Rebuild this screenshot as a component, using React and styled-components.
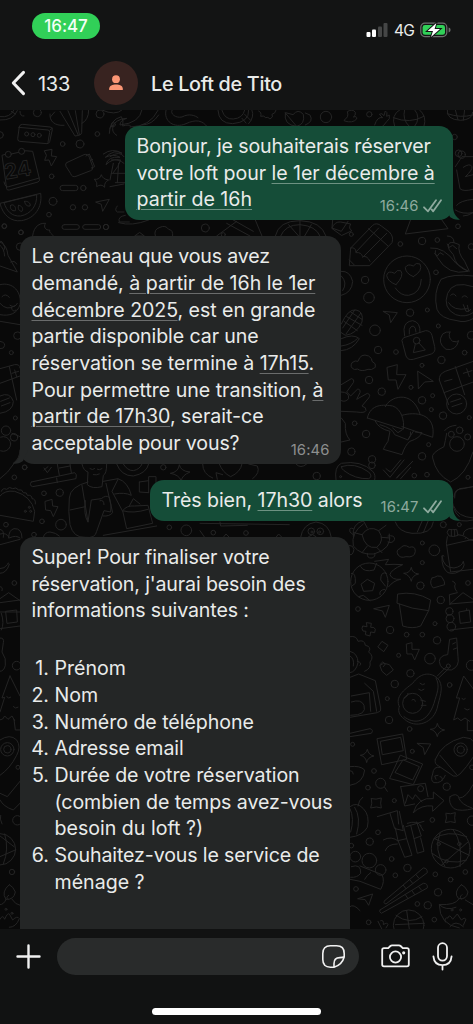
import React from "react";
import styled, { createGlobalStyle } from "styled-components";

const GlobalStyle = createGlobalStyle`
  * {
    box-sizing: border-box;
  }

  body {
    margin: 0;
    background: #111212;
    font-family: Inter, "Liberation Sans", sans-serif;
    -webkit-font-smoothing: antialiased;
  }
`;

const Phone = styled.div`
  width: 473px;
  height: 1024px;
  display: flex;
  flex-direction: column;
  overflow: hidden;
  background: #111212;
  color: #e9ebea;
`;

const Header = styled.header`
  height: 110px;
  flex: none;
  background: #131414;
`;

const StatusBar = styled.div`
  height: 56px;
  padding: 13px 22px 0 32px;
  display: flex;
  justify-content: space-between;
  align-items: flex-start;
`;

const Clock = styled.div`
  width: 68px;
  height: 26px;
  border-radius: 13px;
  background: #31d058;
  color: #f4fff6;
  font-size: 17px;
  font-weight: 500;
  letter-spacing: -0.1px;
  line-height: 26px;
  text-align: center;
`;

const StatusIcons = styled.div`
  display: flex;
  align-items: center;
  gap: 6px;
  padding-top: 8px;
  height: 26px;
`;

const Network = styled.span`
  width: 20px;
  font-size: 15.6px;
  font-weight: 400;
  letter-spacing: -0.8px;
  line-height: 18px;
  padding-top: 1px;
  white-space: nowrap;
`;

const NavRow = styled.div`
  height: 54px;
  padding-left: 11px;
  display: flex;
  align-items: center;
`;

const Unread = styled.span`
  width: 44px;
  margin-left: 12px;
  padding-top: 2px;
  font-size: 20px;
  letter-spacing: -0.3px;
`;

const Avatar = styled.div`
  width: 44px;
  height: 44px;
  margin-left: 12px;
  border-radius: 50%;
  background: #382320;
  display: flex;
  align-items: center;
  justify-content: center;
`;

const Title = styled.h1`
  margin: 0 0 0 13px;
  padding-top: 2px;
  font-size: 19.8px;
  font-weight: 550;
  letter-spacing: -0.3px;
  white-space: nowrap;
`;

const Chat = styled.main`
  height: 819px;
  flex: none;
  display: grid;
  grid-template: 819px / 473px;
  overflow: hidden;
  background: #090909;
`;

const Wallpaper = styled.svg`
  grid-area: 1 / 1;
  fill: none;
  stroke: #242424;
  stroke-width: 3;
  stroke-linecap: round;
  stroke-linejoin: round;
`;

const Messages = styled.div`
  grid-area: 1 / 1;
  z-index: 1;
  padding: 16px 20px 0;
  display: flex;
  flex-direction: column;
  gap: 16.4px;
`;

const Bubble = styled.div`
  position: relative;
  flex: none;
  align-self: ${({ $mine }) => ($mine ? "flex-end" : "flex-start")};
  width: ${({ $width }) => $width}px;
  min-height: ${({ $minHeight }) => $minHeight || 0}px;
  padding: 7px 11.5px;
  border-radius: 14px;
  background: ${({ $mine }) => ($mine ? "#154d38" : "#242626")};
  --mark: ${({ $mine }) => ($mine ? "#6d9282" : "#6a6c6c")};
  --meta: ${({ $mine }) => ($mine ? "#8eaa9e" : "#8d8f8f")};
`;

const Line = styled.div`
  height: 26.67px;
  font-size: 19.6px;
  line-height: 27.4px;
  letter-spacing: ${({ $track }) => $track || 0}px;
  white-space: pre;
`;

const Mark = styled.span`
  text-decoration: underline;
  text-decoration-color: var(--mark);
  text-decoration-thickness: 1px;
  text-underline-offset: 3px;
`;

const Meta = styled.div`
  position: absolute;
  right: 11.5px;
  bottom: 4.6px;
  display: flex;
  align-items: center;
  gap: 4px;
  color: var(--meta);
  font-size: 14.8px;
  letter-spacing: 0.12px;
  line-height: 18px;
`;

const Tail = styled.svg`
  position: absolute;
  bottom: 0;
  ${({ $mine }) => ($mine ? "right: -7px;" : "left: -7px; transform: scaleX(-1);")}
  fill: ${({ $mine }) => ($mine ? "#154d38" : "#242626")};
`;

const List = styled.ol`
  margin: 31.4px 0 0;
  padding: 0;
  list-style: none;
`;

const Item = styled.li`
  display: grid;
  grid-template-columns: 17.5px 1fr;
  column-gap: 5.5px;
`;

const Marker = styled(Line)`
  display: flex;
  justify-content: flex-end;
`;

const Composer = styled.footer`
  flex: 1;
  display: flex;
  flex-direction: column;
  justify-content: space-between;
  align-items: center;
  padding: 9px 0 9.5px;
`;

const InputRow = styled.div`
  width: 100%;
  height: 36.5px;
  padding: 0 20px 0 16px;
  display: flex;
  align-items: center;
`;

const Field = styled.div`
  width: 302px;
  height: 36.5px;
  margin: 0 22px 0 16px;
  padding-right: 13px;
  border-radius: 19px;
  background: #292b2b;
  display: flex;
  align-items: center;
  justify-content: flex-end;
`;

const Icon = styled.svg`
  flex: none;
  display: block;
  margin-left: ${({ $ml }) => $ml || 0}px;
  fill: none;
  stroke: ${({ $color }) => $color || "#f1f1f1"};
  stroke-width: ${({ $weight }) => $weight || 1.8};
  stroke-linecap: round;
  stroke-linejoin: round;
`;

const HomeBar = styled.div`
  width: 169px;
  height: 6.5px;
  border-radius: 4px;
  background: #fff;
`;

// doodle strokes, drawn at 3x and grouped by area of the wallpaper
const patches = [
  {
    x: 0,
    y: 100,
    dots: [
      [0, 105, 10], [112, 38, 12], [300, 42, 12], [292, 102, 7], [188, 132, 7], [240, 132, 12],
      [155, 229, 7], [250, 264, 8], [219, 322, 8], [255, 322, 8], [159, 304, 12], [147, 344, 7],
      [13, 379, 7], [63, 397, 7], [318, 381, 8], [60, 440, 11], [80, 102, 6], [99, 104, 6],
      [118, 106, 6], [25, 163, 9], [65, 154, 9],
    ],
    paths: [
      "M58 80q2-8 10-7l82 8q8 1 7 8l-8 36q-2 6-8 6l-82-7q-7-1-6-8zM56 82l88 8q6 1 5 7l-5 30M150 90l7-5",
      "M134 152l22-4-2 20 16 2-16 28-7-18-13 1 5-14z",
      "M16 163l-10 3 14 100q1 6 8 4l86-24q6-2 4-10L98 154l-24-2M56 157l-22 5M12 246q4 18 14 14l92-26",
      "M0 310l122-30c6 42-18 76-58 82C34 366 8 346 0 310M12 308l98-24c2 34-18 58-48 64-26 2-42-14-50-40",
      "M32 316c6-6 18 4 14 16-10 2-18-6-14-16M56 316c8 0 16 10 10 18-10 0-14-10-10-18M74 304c8-2 20 6 16 14-10 2-16-6-16-14",
      "M200 188l52-24q12-4 16 8l10 28q2 10-6 12l-44 17q-12 4-16-8l-14-22q-4-8 2-11M258 168l10-6 16 38-10 4M272 182l6-4",
      "M284 238q16 2 20-14q4 14 22 16q-14 6-12 22q-10-12-24-2q4-12-6-22",
      "M188 256h38a8 8 0 0 1 0 16h-38a8 8 0 0 1 0-16M193 374h38a7 7 0 0 1 0 14h-38a7 7 0 0 1 0-14M255 374h40a7 7 0 0 1 0 14h-40a7 7 0 0 1 0-14",
      "M288 306l40-8-20 36-4-20z",
      "M310 162q28-20 56-2-22-14-50 12 24-12 44 0-36-4-42 22 20-20 44-14-6 20-22 38M340 190l-10 50M356 190l-4 58M334 220h40M346 248h30M352 318q-10 12 0 18h20M376 346q-24 4-18 20h30",
      "M150 42c-2 22 14 36 42 34M164 36l-12 14M180 34l45 74q20-2 20-10l2-66M204 32l30 72M226 32l12 72M246 70q20-10 20-40",
      "M328 100q0-40 36-50 8 10 4 28 20-6 24 0M340 76q-8 20 10 30M306 30q40 18 60 0",
      "M0 60q40 2 52-28M0 50q30 4 42-20M34 34l12 8M60 34q0 16 12 14",
      "M97 420c0-34 16-52 40-50-8 10 0 22 12 20-2 12 12 10 12 24",
      "M0 424q8-2 10 10 8 6 2 16",
    ],
  },
  {
    x: 110,
    y: 105,
    dots: [[648, 36, 17], [778, 28, 8], [1055, 149, 11], [1034, 96, 8]],
    paths: [
      "M0 70q20-30 50-30-20 6-20 20 60-6 66-46M60 66q60 0 84-50M96 60q30 0 50-30",
      "M168 16c-8 32 24 56 60 40 30-14 50-10 64 10M186 16c-6 10 10 24 30 20 22-12 40-4 48 2",
      "M324 16q2 40 44 40 50-4 48-40M336 16q8 28 34 26 28-2 34-26M396 40l12 14M404 28l18 18M426 16q8 20-10 40",
      "M446 18q10 4 6 16 12-4 14 4 8-4 14 4 12-6 6-14 10-2 12-12",
      "M526 24q-6 36 34 40 26-6 20-36-16-18-30 0zM560 64l-34-40M586 60q26-10 14-30l-14-6",
      "M704 44q14-8 8-24 16-10 24 2 2 10-6 14 12-4 10 6-12 14-36 6zM794 60q8-26 24-22l-10-10q8-6 14 4l4-14q8 2 4 16l8-4q4 12-8 20-10 16-20 18",
      "M854 64q-12-34 16-50M942 64q10-30-14-50M850 38q50 20 92-4M884 14q-8 30 14 50M914 14q20 24 0 50",
      "M1012 14q-4 30 40 32 36-2 36-24M1036 14l8 30M1064 14l-4 32M1012 26q40 14 76 4",
    ],
  },
  {
    x: 110,
    y: 110,
    dots: [[1046, 130, 10], [10, 44, 6]],
    paths: [
      "M1036 170q20-30 20-30h33M1040 180l10 56q10 10 39 2M1060 172q20-14 26-2 2 10-20 30l24-6",
      "M1040 286q10-14 49-18M1036 300q20 14 53 8M1060 318q14 0 29-10",
      "M0 140q30-20 42 0M4 150q22-4 38 10M0 230l42-8",
    ],
  },
  {
    x: 0,
    y: 220,
    dots: [
      [13, 18, 7], [63, 37, 7], [318, 21, 8], [616, 24, 12], [670, 44, 6], [52, 347, 11],
      [34, 398, 6], [46, 594, 6], [18, 632, 14], [42, 652, 11], [10, 672, 22], [74, 742, 7], [490, 742, 8],
    ],
    paths: [
      "M356 8q40 12 90-8M418 38l-14 10h28zM466 48q-6-20 14-26 16-8 26 6 14 2 12 20",
      "M680 10l70 38M700 0l60 34M650 48l60-44M766 0l20 48M826 48q10-46 74-46 64 2 78 46M842 48q14-34 58-34 48 4 60 34M900 2v46M866 14l30 34M934 14l-20 34M996 24q8-20 26-18l30 6q-8 14 4 20l-30 14z",
      "M0 66q20 6 24 40l28 50-52-18M0 76q12 8 14 32M32 126q12-6 18 6",
      "M0 194c40-10 66 24 60 60-8 26-30 36-60 30M6 230q10-12 22 2M30 256q14 10 22-6M34 262q4 18 14 8M0 304l60 10M0 250q20 24 44 8",
      "M0 364q22 4 10 20l-10 2M0 446l44-12q16-2 16 10M0 490l60-22M28 440l22 100M36 460l20-6M44 450l6 20M0 528q30-14 40 16 0 30-40 36M2 544l26-10M4 558l26-10",
      "M36 640l24 10M40 730q20-14 20-40",
    ],
  },
  {
    x: 330,
    y: 220,
    dots: [
      [64, 43, 6], [211, 72, 7], [276, 63, 11], [322, 60, 7], [384, 19, 7], [318, 157, 7], [105, 180, 11],
      [117, 233, 16], [240, 278, 11], [292, 270, 6], [135, 331, 16], [325, 318, 6], [144, 390, 11],
      [198, 396, 7], [334, 420, 11], [404, 398, 7], [424, 346, 12], [276, 436, 6], [117, 480, 11],
      [243, 502, 6], [155, 515, 11], [276, 541, 11], [308, 527, 6], [304, 569, 6], [339, 587, 11],
      [418, 593, 6], [74, 610, 7], [108, 642, 11], [296, 674, 6], [64, 695, 11], [126, 718, 11],
      [276, 709, 11], [253, 767, 7], [291, 764, 7], [414, 772, 6], [231, 178, 70], [381, 672, 22],
      [364, 643, 9], [389, 631, 10], [413, 651, 9], [260, 362, 10], [380, 552, 30], [424, 80, 9],
    ],
    paths: [
      "M8 0l-2 24 28 10 20-30M252-28L226 42 354 26 316-28",
      "M58 136l4-52 66-68q12-10 26 2l24 18q14 14 8 32l-66 68zM62 84q16-4 16 14 16-2 20 12 14-4 22 14M78 96l68-72M98 112l72-72M116 26l58 52M58 120l14 14",
      "M198 194Q172 184 170 166Q174 150 194 160Q200 148 212 152Q224 166 198 194M250 170Q226 160 226 142Q234 130 250 138Q258 126 270 132Q280 152 250 170M196 204q16 24 40 22 36-6 38-48",
      "M302 84q40-4 76 46l36 24q-60 14-92-42-10-12-6-20M352 48q20 0 20 20l16 6q-6 24 16 50l14 30q-40-10-48-50-16-16-16-26 2-14 18-10M314 100l8 8 8-10 10 6M352 72l6 10 10-6 12 10",
      "M429 168q-60-8-96 10-24 40-12 90 10 28 60 34 24 8 48-6M429 200q-60-20-76 20-16 44 24 64 30 10 52-6M362 226q8-10 16 2M396 232q8-10 16 0M356 248q14 26 56 18M400 254l8 20q10 4 14-6M412 256l4 16",
      "M160 274l42 4-20 30-4-22z",
      "M224 348l-2-20q2-24 26-26 24 4 22 36M238 342v-14q4-10 12-10 8 4 8 18M220 354q-8 6-2 16l10 38q6 14 22 10l54-16q14-6 10-22l-8-34q-4-14-18-14zM256 372l-6 26 36-8-20-22",
      "M360 336q-8 16 8 28 14 4 18-2-8 32-38 26-28-20-10-46 10-8 22-6",
      "M34 154q26-2 34 30-2 34-34 42M34 168q20 20 4 44M34 312q20-46 44-42 24 4 18 36-16 36-50 40l-12-8M50 290l46 26M42 304l40 28M62 276l34 22M74 270l-36 54M92 280l-44 62M34 356q36-16 54 0-20 34-54 36M34 378q30-4 48-22",
      "M72 448q-14-6-6-20 10-8 18-4 8-26 32-16 12 8 10 16 14 6 10 18-12 10-22 6-20 8-30 0z",
      "M172 442l30-8-2 30 28 0-24 44-6-28-22 0zM264 454l46 30-26 2-18 20z",
      "M34 494l30-18q10 2 6 12l-20 28 12 12 20-20q10-2 8 10l-10 20 32-18q12 4 4 14l-20 24q14 4 12 14-4 8-28 4l-46-2M34 516q24 0 22 20-10 12-22 6",
      "M328 480q-2-18 18-26l84-30M328 480l28 74M342 518l88-32M376 440l28 84M344 484l22-6M400 460l26-8M410 446l8 24M362 546l30-10M366 560l30-10",
      "M112 594c10-44 50-40 76-36 26 8 36 44 32 70l-108-34M166 560c10-28 80-56 104 22M216 586c40-12 104-6 92 66l-92-32M136 604q10 22 44 30l-6 30q-10 14-14 24l56 16q10-30 24-40 30-10 36-26l-20-2M150 614q40 12 44 30l40 16q10-14 8-24M188 624l16 14 12-8M250 634l-14 22",
      "M34 594l12 16q-2 34 14 50l-26 6",
      "M350 640q-4 24-8 40-40 20-34 34 10 50 54 72 46-20 67-90M344 632q10-14 34-16",
      "M18 780q-6-40 16-50 60-10 94 24 10 10 6 26M34 740q40-14 82 16 14 14 0 20-40 2-74-24-8-6-8-12",
      "M160 750l20 22 42-52M176 752l6 4 30-36M200 774l48-50M212 776l30-34M168 746l10 8M200 774l8-10",
      "M372 830q0-24 28-24l29-6M372 860q10 30 57 34M368 830q-4 40 20 60",
    ],
  },
  {
    x: 0,
    y: 460,
    dots: [
      [74, 22, 7], [43, 52, 7], [132, 100, 7], [179, 98, 11], [126, 184, 7], [183, 194, 16], [18, 194, 7],
      [102, 224, 7], [88, 142, 3], [76, 154, 3], [92, 154, 3], [508, 202, 7], [559, 211, 16], [640, 218, 7],
      [738, 219, 7], [950, 48, 11], [934, 214, 10], [961, 214, 10], [936, 216, 3], [959, 216, 3],
      [1022, 50, 3], [1116, 16, 10],
    ],
    paths: [
      "M0 56q24-16 44-48M132 30l12-10M132 24l10 14 12-16",
      "M94 66l130-28q8 4 4 18l-130 24q-12-4-4-14M178 46l-6-34M214 38l-4-26M170 54l2 14M178 24l32-6",
      "M0 108q14-18 44-14 50 14 60 60l-4 30-100-18M4 94q4-12 16-6 8-10 18-2 10-6 18 4 10-4 14 8 12-2 12 8 14-2 14 10 12 0 10 16",
      "M136 124l20-6 2 20 16 2-14 30-8-18-14-2z",
      "M26 234q0-24 16-28 24-2 24 28M0 208q14 2 10 24M130 232q4-16 20-16 18 2 28 12",
      "M246 12q4 20 18 24l-2 38q14 14 44 6l4-34q10-4 10-34M270 26q8 6 14 0M292 28q6 4 14-2M280 44q10 2 18-2",
      "M264 66q-54 14-56 48-4 40 2 80 10 40 46 38 30 4 34-18l22-62 20 4q4-20-4-44-10-8-24 4l-30 4-10 66q-14-22-8-64M210 150l46-10M246 76l18 110M310 64l44-8q30 10 40 50-20-10-50-4M318 70l20 88q-10 12-28 10M354 58l-18 36 32 60M300 122q12-4 12 12",
      "M370 150q10-14 34-12l40-2 14 54-78 16-12-54q30 10 76-4M388 138l12-22 20 16M310 226l160-28",
      "M350 12q14 36 50 36 40-8 46-36M370 12q12 20 30 20 20-4 26-20",
      "M418 66l28-4v-12h22v16M418 66v30l28 2M446 62v36",
      "M512 40q24-4 26-26 4 20 32 22-24 10-26 26-8-18-32-22M608 12q0 30 30 42M658 12q10 26 34 38 30-14 34-38M652 58l-4-20 20 6M746 12l26 6q10 20-14 38M888 12q14 16 32 0",
      "M600 190l268 4M600 212l14 20M660 186l2 12 80-2M670 232l8-10 10 10M828 232l8-10 10 10M902 232q6-40 46-46 40 4 46 46M926 230l12-6 10 6",
      "M1364 114q-2-30 30-30l25-4M1360 170q20 20 59 10",
    ],
  },
  {
    x: 340,
    y: 520,
    dots: [
      [247, 69, 6], [283, 91, 16], [247, 128, 6], [241, 197, 11], [384, 189, 7], [54, 267, 7], [302, 240, 11],
      [150, 330, 11], [285, 311, 6], [200, 344, 7], [247, 344, 7], [291, 361, 11], [176, 406, 6],
      [270, 416, 16], [211, 460, 11], [164, 492, 11], [329, 495, 7], [142, 536, 6], [147, 600, 11],
      [209, 627, 7], [38, 673, 6], [217, 694, 6], [102, 753, 7], [84, 803, 7], [163, 842, 6],
      [320, 800, 11], [277, 900, 7], [114, 937, 7], [89, 965, 11], [34, 977, 7], [155, 1017, 7],
      [202, 1044, 11], [166, 1066, 7], [286, 1063, 7], [332, 1079, 7], [376, 1056, 7], [48, 1107, 7],
      [294, 1117, 11], [232, 1152, 7], [263, 1156, 11], [86, 1207, 7], [283, 1199, 7], [394, 436, 15],
      [396, 742, 7], [396, 902, 14], [88, 185, 56], [218, 550, 30], [362, 689, 20], [362, 689, 11],
      [332, 986, 58], [296, 972, 5], [358, 972, 5], [320, 1024, 5], [122, 790, 15], [242, 806, 9],
      [88, 1022, 22], [46, 1010, 16], [122, 1050, 16], [362, 1170, 3], [336, 1170, 3], [310, 14, 9], [358, 14, 6],
      [325, 438, 6], [328, 274, 11], [330, 296, 12], [334, 320, 13], [206, 1216, 46],
    ],
    paths: [
      "M40 50q-6-40 32-48M148 42q10 44-46 60-40 4-62-24-8-40 30-66M66 44q20-30 50-12 20 30-6 50-34 6-44-38M66 44l-24-6M82 24l-12-22M116 32l22-16M124 52l26 2M110 82l16 16M82 78l-16 20M40 26q-14-6-10 10l12 10M144 48q20-4 20 10-6 14-20 8M82 100q-2 16 14 14 12-4 8-14M28 76q12 0 14 12-4 20-12 16",
      "M166 6q10 30 50 34 60 4 64-34M232 36l14-32M250 38l14-34",
      "M174 104q-8-14 6-18 10-16 28-4 18-6 18 12-2 20-28 16-18 6-24-6",
      "M322 36l4-8q12 2 24 0l4 18q-12 6-26 2zM322 50q-6 20 0 40l10 66 67-8M354 44q30 4 22 12M320 76l79-18M334 28v20M344 28v20M370 44q0-18 29-20M378 52q10 10 21 10",
      "M306 108q4 36 36 36 24-4 28-20 6 10-2 22-20 20-44 12-20-14-18-50 2-4 6 0",
      "M62 140q10 18 40 10l8-20M64 192l18-14 22 12-6 22-26 2zM34 160q14-4 12 30l-10 8M140 160q-18-8-18 20l14 18M56 230l14-4 20 16M120 224q-4-14 14-16M104 124l42-6-10 16q26-2 52 0-36 16-38 30 6 16 32 14-22 4-36 22",
      "M192 160q18 0 22-18 2 18 22 20-20 4-22 22-4-18-22-24M276 174q10-2 16-6 14 0 14 4 10 14 8 22-14 4-34 10-14-14-4-30M338 184q12 4 6 14 0 10 6 16",
      "M102 266l46-10-12 36-8-18zM174 222q50-10 98 18l-6 32q-50-4-94-22zM178 252l10 66q30 10 54 0l24-46",
      "M330 254l-2-30 24-6M330 252l39-34 30 20M330 252l69-6M330 330l69-8M358 276l30-6 4 36-30 4zM380 270v-4",
      "M80 308l14 2-2 12q12-2 14 6l-2 10-12-2-2 12-14-4 2-10q-12 2-12-8l2-8 12 2zM114 380l12-16 18 12-12 18zM200 372l16-4 0 20 22 0-14 32-8-18-14 0zM120 438l6 16 14 12 20-16-12-16-16-4zM120 434l8-8 8 6-6 8",
      "M30 350q20-4 24 14 20-6 22 12 20 4 10 20 18 14 4 30 4 20-16 28M30 394q24 6 24 34-6 28-24 30M30 408q14 8 10 30M52 424q16 4 8 12M30 472l26-10 50 20 16 82q4 10-10 14l-82 14M74 490l26 24 10 60M34 528l54-10 4 56M34 546q30-10 38 10 10 30-40 30",
      "M330 358l20-4 4 56q6 30-20 40-34 2-36-26 2-18 24-20zM346 368l-8 4M350 384l-10 4M320 440l-28 28M326 446l-30 28",
      "M178 560c-14-30 14-50 40-70 22-30 50-36 74-16 20 20 10 50 2 80-10 60-70 72-100 44-20-14-20-30-16-38M192 590c30 24 70 20 90-40 8-30 20-50 6-76M204 520q0 10-12 14M216 540q8-6 10 4M236 508q8 8 16 0M240 490q8 8 14 2M242 540l14 4M244 556l14 0",
      "M399 506l-28-38-22 66 10 0-18 66 12-6 10 8 12-8 14 10M382 602v30l17 0M366 536q6 6 10 0M374 566q8 8 14 2",
      "M30 640l60-14q12 4 4 14l-64 10M272 628q18 0 20-18 4 18 22 20-20 4-22 20-4-18-20-22M62 706q16-2 20-18 4 18 20 20-20 4-22 20-2-18-18-22",
      "M112 656l76-14 12 76-74 16zM122 664l60-12 8 40-62 12zM182 706l66 26-28 62-70-18zM190 720l48 20-20 40-52-22zM182 800l74-10 8 40M182 800l12 58 30-6M196 850l8-26 14 14 8-14 20 22",
      "M220 878q14-48 60-42l0-20 32 26-34 32 0-16q-34-4-58 20M232 670l40 2-18 32-4-20z",
      "M286 718q20-50 84-66l22 4 7 8M286 718q-4 14 10 20l44 30q10 4 20-6 20-20 39-50M300 706l50 58M300 742q-20-4-22 20-8 20 4 26 24 4 34-22M288 778l-4-10 10-2M300 770q10 0 6 12",
      "M30 740q30-4 44 10-4 40-44 46M30 752q10 0 10 10M330 830q20-14 28 4 20 0 41-40M330 830q-6 20 12 36 20 10 57 0M356 834q8 20 40 30M134 802l8 12",
      "M94 836q14 4 30-2-4 16 0 30-14-6-32 0q6-14 2-28M318 880q14 4 28-2-4 16 0 30-14-6-30 0q6-14 2-26",
      "M30 860q20-16 40 6 20 20 12 56-14 26-52 30M44 862q20 30 6 80M54 858q2-18 14-26M30 866q14 30 2 70",
      "M112 890l60-18 4 40M150 880l14 46 26 6-12-58M166 924l8 38 26-6-10-40M174 962l20 50 22-6-16-50M130 960q24-14 46 4M136 992q6-20 36-20M198 920l54-16M202 910q30-10 42 8M212 916l10 40 22-8-14-42M222 956l10 44 20-6-10-40M240 916l10 16",
      "M280 958q40-30 100-8M276 1000q50 40 104 20M300 940q-20 50 14 98M340 930q30 40 20 110M284 956l104 50M304 1036l80-70",
      "M34 1040q30-10 28 20-10 14-30 12M60 1038l66 26q10 20-4 44l-62-24-30-6M74 1078q6-12 18-20",
      "M134 1142l116-98q12 0 12 14l-124 94q-10-2-4-10M190 1096l8 10M210 1080l8 10M228 1064l8 10M120 1170l130-80q14 0 12 14l-138 76q-8-4-4-10M196 1124l8 12M216 1112l8 12M236 1100l8 10",
      "M54 1136l44-14-12 34-10-16zM30 1160q10-10 30 12M114 1204l12 24M122 1202q10-4 8 12 12-8 14 0l-6 10M168 1186q40 30 78 4M200 1172l8 56M166 1214l88-4",
      "M364 1094q-26 24-8 42 24 4 28-20-8-18-20-22M366 1124q-10 8-2 14M356 1138q-10 18-58 16 0 60 60 70M376 1140l23 14M298 1154q20 20 50 8M316 1206q-4-14 8-12 4-14 14 4l14-16 12 18q10-10 14-2l-8 18M330 1220q16-22 40 0",
    ],
  },
  {
    x: 0,
    y: 530,
    dots: [[43, 159, 7], [22, 658, 20], [22, 658, 11], [50, 407, 13], [54, 712, 6], [52, 871, 14], [36, 1026, 8], [18, 1138, 3], [36, 1150, 3], [0, 958, 47]],
    paths: [
      "M0 12q20-6 28 12 20-10 32 0M0 44l60-16M0 130q20 0 28-28-4-8-6 2-8 12-22 12",
      "M0 170q10 0 6 12M0 206l26-18 34 24M0 218l60-8M0 246h60M0 296l60-8M18 244l32-4 2 36-30 4zM4 250q10 30 0 50",
      "M0 324q14 0 10 14l-4 28q14 20 10 40-4 18-16 18M30 438l-24 66 8-2-14 44M30 438l30 60M0 570q10 0 14-12l10 10 12-10 8 14M42 568l4 32h14M20 500q6 8 12 2M40 530q6 8 14 2",
      "M0 630q30-20 50 0 14 20 0 46-20 40-50 60M0 790l22 10 38-46M0 810q10 20 40 30l20-20M2 856q-4 10 4 26",
      "M0 918l42 32M0 980l46-20M14 912q14 46-4 90",
      "M28 1064q-26 22-10 44 24 2 28-22-6-16-18-22M26 1096q-10 6-2 12M18 1108q-6 16-18 16M36 1108q10 16 24 18M0 1168q8-16 14 0 8-20 14-16l10 18q14-14 20-4-10 26-30 26",
    ],
  },
];

const Doodles = () => (
  <Wallpaper width="473" height="819" viewBox="0 110 473 819">
    {patches.map((p, i) => (
      <g key={i} transform={`translate(${p.x} ${p.y}) scale(.3333)`}>
        {p.paths.map((d, n) => (
          <path key={n} d={d} />
        ))}
        {p.dots.map(([cx, cy, r], n) => (
          <circle key={n} cx={cx} cy={cy} r={r} />
        ))}
      </g>
    ))}
    <text x="4" y="178" fontSize="21" fontWeight="700" strokeWidth="0.9" transform="rotate(-10 14 170)">
      24
    </text>
  </Wallpaper>
);

const Checks = () => (
  <Icon width="19" height="14" viewBox="0 0 19 14" $weight={1.8} $color="var(--meta)">
    <path d="M1 8.3 5 12.3 13 1.3M8.6 10.4 10.2 12.3 18 1.3" />
  </Icon>
);

const BubbleTail = ({ mine }) => (
  <Tail $mine={mine} width="17" height="14" viewBox="0 0 17 14">
    <path d="M2 0H10C10 5.5 12 10.5 17 13.4C13.4 14.2 9.6 13 7 11Z" />
  </Tail>
);

const Message = ({ mine, width, minHeight, time, children }) => (
  <Bubble $mine={mine} $width={width} $minHeight={minHeight}>
    {children}
    {time && (
      <>
        <Meta>
          {time}
          {mine && <Checks />}
        </Meta>
        <BubbleTail mine={mine} />
      </>
    )}
  </Bubble>
);

const questions = [
  [["Prénom"]],
  [["Nom"]],
  [["Numéro de téléphone", -0.05]],
  [["Adresse email", -0.13]],
  [
    ["Durée de votre réservation", -0.08],
    ["(combien de temps avez-vous", -0.09],
    ["besoin du loft ?)"],
  ],
  [["Souhaitez-vous le service de", -0.13], ["ménage ?"]],
];

const App = () => {
  return (
    <Phone>
      <GlobalStyle />
      <Header>
        <StatusBar>
          <Clock>16:47</Clock>
          <StatusIcons>
            <svg width="22" height="14" viewBox="0 0 22 14">
              <rect x="0.5" y="9" width="4" height="5" rx="1" fill="#fff" />
              <rect x="6" y="6.5" width="4" height="7.5" rx="1" fill="#fff" />
              <rect x="12" y="3.5" width="4" height="10.5" rx="1" fill="#454646" />
              <rect x="17.5" y="0" width="4" height="14" rx="1" fill="#454646" />
            </svg>
            <Network>4G</Network>
            <svg width="31" height="16" viewBox="0 0 31 16">
              <rect x="0.8" y="1.2" width="26" height="13.4" rx="4" fill="none" stroke="#6c6e6d" strokeWidth="1.2" />
              <rect x="2.6" y="3" width="22.4" height="9.8" rx="2.4" fill="#31d058" />
              <path d="M28.6 5.6Q30.6 6 30.6 8T28.6 10.4Z" fill="#6c6e6d" />
              <path
                d="M16.4.9 7.6 9H13L11 15.1 20 7H14.6Z"
                fill="#fff"
                stroke="#131414"
                strokeWidth="2"
                paintOrder="stroke"
              />
            </svg>
          </StatusIcons>
        </StatusBar>
        <NavRow>
          <Icon width="15" height="26" viewBox="0 0 15 26" $weight={3}>
            <path d="M12.5 2.4 2.3 13 12.5 23.6" />
          </Icon>
          <Unread>133</Unread>
          <Avatar>
            <svg width="16" height="16" viewBox="0 0 16 16" fill="#fb9675">
              <circle cx="8" cy="4.2" r="3.9" />
              <path d="M1.2 15V13.6C1.2 10.6 4.6 9.4 8 9.4S14.8 10.6 14.8 13.6V15Z" />
            </svg>
          </Avatar>
          <Title>Le Loft de Tito</Title>
        </NavRow>
      </Header>

      <Chat>
        <Doodles />
        <Messages>
          <Message mine width={328} time="16:46">
            <Line $track={-0.12}>Bonjour, je souhaiterais réserver</Line>
            <Line $track={-0.06}>
              votre loft pour <Mark>le 1er décembre à</Mark>
            </Line>
            <Line>
              <Mark>partir de 16h</Mark>
            </Line>
          </Message>
          <Message width={321} time="16:46">
            <Line $track={-0.18}>Le créneau que vous avez</Line>
            <Line>
              demandé, <Mark>à partir de 16h le 1er</Mark>
            </Line>
            <Line $track={-0.06}>
              <Mark>décembre 2025</Mark>, est en grande
            </Line>
            <Line $track={-0.1}>partie disponible car une</Line>
            <Line $track={-0.05}>
              réservation se termine à <Mark>17h15</Mark>.
            </Line>
            <Line $track={-0.03}>
              Pour permettre une transition, <Mark>à</Mark>
            </Line>
            <Line>
              <Mark>partir de 17h30</Mark>, serait-ce
            </Line>
            <Line $track={-0.12}>acceptable pour vous?</Line>
          </Message>
          <Message mine width={303} time="16:47">
            <Line $track={-0.07}>
              Très bien, <Mark>17h30</Mark> alors
            </Line>
          </Message>
          <Message width={329.5} minHeight={430}>
            <Line $track={-0.1}>Super! Pour finaliser votre</Line>
            <Line $track={-0.14}>réservation, j'aurai besoin des</Line>
            <Line $track={-0.12}>informations suivantes :</Line>
            <List>
              {questions.map((lines, i) => (
                <Item key={i}>
                  <Marker>{i + 1}.</Marker>
                  <div>
                    {lines.map(([text, track]) => (
                      <Line key={text} $track={track}>
                        {text}
                      </Line>
                    ))}
                  </div>
                </Item>
              ))}
            </List>
          </Message>
        </Messages>
      </Chat>

      <Composer>
        <InputRow>
          <Icon width="25" height="25" viewBox="0 0 25 25" $weight={2.4}>
            <path d="M12.5 1.5V23.5M1.5 12.5H23.5" />
          </Icon>
          <Field>
            <Icon width="25" height="25" viewBox="0 0 25 25" $weight={1.6}>
              <path d="M13 23.2H9.4Q1.8 23.2 1.8 15.6V9.4Q1.8 1.8 9.4 1.8H15.6Q23.2 1.8 23.2 9.4V13C21.8 18 18 21.8 13 23.2V19.4Q13 13.6 18.8 13.6Q22 13.6 23.2 12.6" />
            </Icon>
          </Field>
          <Icon width="29" height="24" viewBox="0 0 29 24" $weight={1.8}>
            <path d="M3 4.2H7.2L9.4 2Q10 1.4 11 1.4H18Q19 1.4 19.6 2L21.8 4.2H26Q27.8 4.2 27.8 6V20.6Q27.8 22.4 26 22.4H3Q1.2 22.4 1.2 20.6V6Q1.2 4.2 3 4.2Z" />
            <circle cx="14.5" cy="13" r="5.6" />
            <circle cx="22.7" cy="8.8" r=".7" fill="#f1f1f1" />
          </Icon>
          <Icon width="21" height="29" viewBox="0 0 21 29" $weight={1.8} $ml={22}>
            <rect x="6" y="1.2" width="9" height="17.4" rx="4.5" />
            <path d="M1.4 14.4Q2.2 23.2 10.5 23.2T19.6 14.4M10.5 23.2V27.6" />
          </Icon>
        </InputRow>
        <HomeBar />
      </Composer>
    </Phone>
  );
};

export default App;
